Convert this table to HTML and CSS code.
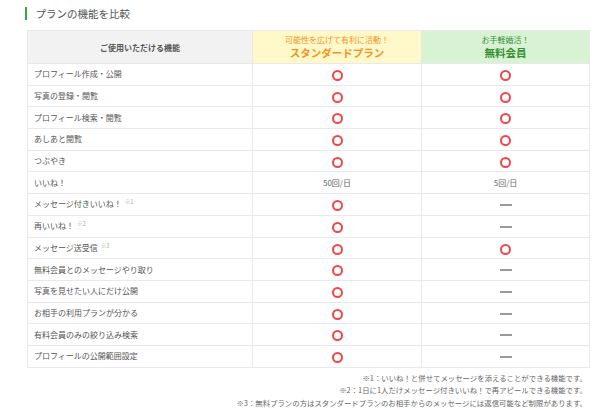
FILE: index.html
```html
<!DOCTYPE html>
<html lang="ja">
<head>
<meta charset="utf-8">
<link rel="stylesheet" href="styles.css">
</head>
<body>
<div class="page">
  <h2 class="title">プランの機能を比較</h2>
  <table class="cmp">
    <colgroup><col class="c1"><col class="c2"><col class="c3"></colgroup>
    <thead>
      <tr>
        <th class="h-feat">ご使用いただける機能</th>
        <th class="h-std"><span class="sub">可能性を広げて有利に活動！</span><span class="name">スタンダードプラン</span></th>
        <th class="h-free"><span class="sub">お手軽婚活！</span><span class="name">無料会員</span></th>
      </tr>
    </thead>
    <tbody>
      <tr><td>プロフィール作成・公開</td><td><i class="ok"></i></td><td><i class="ok"></i></td></tr>
      <tr><td>写真の登録・閲覧</td><td><i class="ok"></i></td><td><i class="ok"></i></td></tr>
      <tr><td>プロフィール検索・閲覧</td><td><i class="ok"></i></td><td><i class="ok"></i></td></tr>
      <tr><td>あしあと閲覧</td><td><i class="ok"></i></td><td><i class="ok"></i></td></tr>
      <tr><td>つぶやき</td><td><i class="ok"></i></td><td><i class="ok"></i></td></tr>
      <tr><td>いいね！</td><td class="val">50回/日</td><td class="val">5回/日</td></tr>
      <tr><td>メッセージ付きいいね！<sup>※1</sup></td><td><i class="ok"></i></td><td><i class="ng"></i></td></tr>
      <tr><td>再いいね！<sup>※2</sup></td><td><i class="ok"></i></td><td><i class="ng"></i></td></tr>
      <tr><td>メッセージ送受信<sup>※3</sup></td><td><i class="ok"></i></td><td><i class="ok"></i></td></tr>
      <tr><td>無料会員とのメッセージやり取り</td><td><i class="ok"></i></td><td><i class="ng"></i></td></tr>
      <tr><td>写真を見せたい人にだけ公開</td><td><i class="ok"></i></td><td><i class="ng"></i></td></tr>
      <tr><td>お相手の利用プランが分かる</td><td><i class="ok"></i></td><td><i class="ng"></i></td></tr>
      <tr><td>有料会員のみの絞り込み検索</td><td><i class="ok"></i></td><td><i class="ng"></i></td></tr>
      <tr><td>プロフィールの公開範囲設定</td><td><i class="ok"></i></td><td><i class="ng"></i></td></tr>
    </tbody>
  </table>
  <div class="notes">
    <p>※1：いいね！と併せてメッセージを添えることができる機能です。</p>
    <p>※2：1日に1人だけメッセージ付きいいね！で再アピールできる機能です。</p>
    <p>※3：無料プランの方はスタンダードプランのお相手からのメッセージには返信可能など制限があります。</p>
  </div>
</div>
</body>
</html>
```

FILE: styles.css
```css
html, body {
  margin: 0;
  padding: 0;
  background: #fff;
}
body {
  font-family: "Noto Sans CJK JP", "Noto Sans", sans-serif;
  color: #555;
}
.page {
  padding: 7px 0 0 25px;
  width: 564px;
}
.title {
  margin: 0;
  height: 13px;
  line-height: 13px;
  font-size: 10.5px;
  font-weight: normal;
  color: #555;
  border-left: 2.5px solid #35a83a;
  padding-left: 8.5px;
}
.cmp {
  margin: 10px 0 0 2px;
  width: 562px;
  border-collapse: collapse;
  table-layout: fixed;
}
.c1 { width: 225px; }
.c2 { width: 169px; }
.c3 { width: 168px; }
.cmp th, .cmp td {
  border: 1px solid #e9e9e9;
  padding: 0;
}
.cmp thead th {
  height: 33px;
  box-sizing: border-box;
  text-align: center;
  vertical-align: middle;
  font-size: 8px;
  font-weight: bold;
}
.h-feat {
  background: #f2f2f2;
  color: #555;
}
.h-std { background: #fff8c9; }
.h-free { background: #d7f3d4; }
.sub {
  display: block;
  font-size: 8px;
  font-weight: normal;
  line-height: 12px;
}
.name {
  display: block;
  font-size: 10.5px;
  font-weight: bold;
  line-height: 14px;
}
.h-std .sub, .h-std .name { color: #f39325; }
.h-free .sub { color: #3f8f3c; }
.h-free .name { color: #36902f; }
.cmp tbody td {
  height: 21.7px;
  box-sizing: border-box;
  font-size: 8px;
  line-height: 10px;
  text-align: center;
  vertical-align: middle;
  color: #555;
}
.cmp tbody td:first-child {
  text-align: left;
  padding-left: 6px;
}
.cmp tbody td.val {
  color: #666;
}
sup {
  font-size: 5.5px;
  color: #aaa;
  vertical-align: 3px;
  line-height: 0;
  margin-left: 3px;
}
.ok {
  display: inline-block;
  width: 11px;
  height: 11px;
  box-sizing: border-box;
  border: 2px solid #f04848;
  border-radius: 50%;
  vertical-align: middle;
  position: relative;
  top: 1px;
}
.ng {
  display: inline-block;
  width: 12px;
  height: 2px;
  background: #9a9a9a;
  vertical-align: middle;
}
.notes {
  margin-top: 4px;
  padding-right: 2px;
  text-align: right;
  font-size: 7.4px;
  line-height: 12.5px;
  color: #666;
}
.notes p {
  margin: 0;
  white-space: nowrap;
}
```
